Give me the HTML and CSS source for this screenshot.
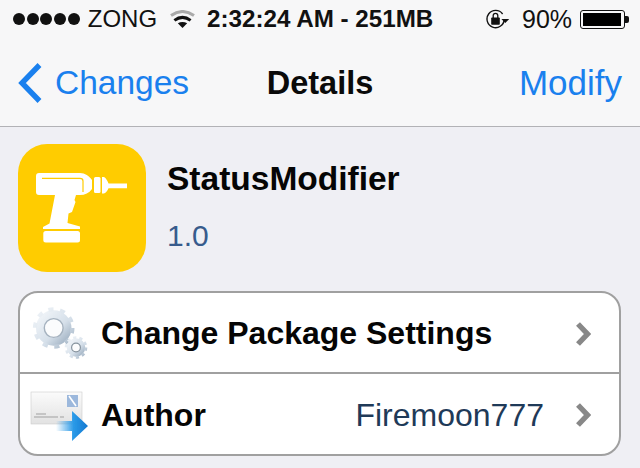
FILE: index.html
```html
<!DOCTYPE html>
<html lang="en">
<head>
<meta charset="utf-8">
<title>Details</title>
<link rel="stylesheet" href="styles.css">
</head>
<body>
<div class="screen">
  <header class="top">
    <div class="status">
      <div class="status-left">
        <div class="dots"><i></i><i></i><i></i><i></i><i></i></div>
        <span class="carrier">ZONG</span>
        <svg class="wifi" width="25" height="18" viewBox="0 0 25 18">
          <path d="M1 5.5 Q12.5 -2.5 24 5.5" fill="none" stroke="#aaa" stroke-width="3"/>
          <path d="M4.4 10.4 Q12.5 4.4 20.6 10.4" fill="none" stroke="#111" stroke-width="3"/>
          <path d="M7.8 13.2 Q12.5 10.6 17.2 13.2 L12.5 18 Z" fill="#111"/>
        </svg>
      </div>
      <span class="clock">2:32:24 AM - 251MB</span>
      <div class="status-right">
        <svg class="rotlock" width="24" height="24" viewBox="0 0 24 24">
          <path d="M18.2 12.6 A8.6 8.6 0 1 1 16.6 7" fill="none" stroke="#111" stroke-width="1.4"/>
          <path d="M15.4 12 L23.2 12 L19.3 16 Z" fill="#111"/>
          <rect x="5.2" y="10.5" width="8.6" height="7.2" rx=".8" fill="#111"/>
          <path d="M7.2 11 V8.6 A2.3 2.3 0 0 1 11.8 8.6 V11" fill="none" stroke="#111" stroke-width="1.3"/>
        </svg>
        <span class="percent">90%</span>
        <div class="battery"><div class="battery-shell"><div class="battery-fill"></div></div><div class="battery-cap"></div></div>
      </div>
    </div>
    <nav class="nav">
      <a class="back">
        <svg class="back-icon" width="24" height="42" viewBox="1 0 24 42"><path d="M22.5 3 L5 21 L22.5 39" fill="none" stroke="#1a80ee" stroke-width="5.4"/></svg>
        <span>Changes</span>
      </a>
      <h1 class="nav-title">Details</h1>
      <a class="nav-action">Modify</a>
    </nav>
  </header>
  <main class="content">
    <section class="package">
      <div class="app-icon">
        <svg width="128" height="128" viewBox="0 0 128 128">
          <path fill="#fff" d="M21 29 H62 C67 29 71 32 74 36 V45 C71 49 67 51 62 51 H58 L56.5 56 L57.5 58 L54 68 L50.5 69.5 L49.5 79 L62 82.5 V85 H25 V83 L31.5 79.5 L37 51 H21 C19 51 18 50 18 48 V32 C18 30 19 29 21 29 Z"/>
          <path fill="none" stroke="#ffcc00" stroke-width="1.2" d="M24 34.4 H62 C64 34.4 65 35.5 65 37 V48"/>
          <rect x="76" y="33" width="6.5" height="16" rx="1.5" fill="#fff"/>
          <path fill="#fff" d="M84 33 H86 C88 34 89.5 37 90.5 39.5 H109 V44.3 H90.5 C89.5 46.5 88 49 86 49.5 H84 Z"/>
          <rect x="25.3" y="87" width="36.7" height="11.5" rx="2.5" fill="#fff"/>
        </svg>
      </div>
      <div class="package-text">
        <h2 class="package-name">StatusModifier</h2>
        <p class="package-version">1.0</p>
      </div>
    </section>
    <section class="card">
      <div class="row row-first">
        <svg class="row-icon" width="60" height="60" viewBox="0 0 60 60">
          <defs>
            <linearGradient id="gear" x1="0" y1="0" x2="1" y2="1"><stop offset="0" stop-color="#f0f4f8"/><stop offset=".6" stop-color="#d6e0ea"/><stop offset="1" stop-color="#a2b3c4"/></linearGradient>
            <filter id="soft" x="-10%" y="-10%" width="120%" height="120%"><feGaussianBlur stdDeviation=".45"/></filter>
          </defs>
          <g filter="url(#soft)">
            <g fill="none" stroke="url(#gear)">
              <circle cx="23.7" cy="24" r="13.5" stroke-width="8.5"/>
              <circle cx="23.7" cy="24" r="18.8" stroke-width="4" stroke-dasharray="5.2 6.6"/>
              <circle cx="46" cy="43.5" r="6.8" stroke-width="5"/>
              <circle cx="46" cy="43.5" r="10" stroke-width="2.6" stroke-dasharray="3.2 3.08"/>
            </g>
            <circle cx="23.7" cy="24" r="9.4" fill="#fbfcfd" stroke="#a5b2bf" stroke-width="1.4"/>
            <circle cx="46" cy="43.5" r="4.4" fill="#fbfcfd" stroke="#86939e" stroke-width="1.2"/>
          </g>
        </svg>
        <span class="row-label">Change Package Settings</span>
        <svg class="chevron" width="18" height="26" viewBox="0 0 18 26"><path d="M4 3 L13.5 13 L4 23" fill="none" stroke="#888" stroke-width="5.4"/></svg>
      </div>
      <div class="row">
        <svg class="row-icon" width="60" height="60" viewBox="0 0 60 60">
          <defs>
            <linearGradient id="mail" x1="0" y1="0" x2="0" y2="1"><stop offset="0" stop-color="#fbfbfb"/><stop offset="1" stop-color="#e2e2e2"/></linearGradient>
            <linearGradient id="arrow" x1="0" y1="0" x2="1" y2="0"><stop offset="0" stop-color="#3aa0e8" stop-opacity="0"/><stop offset=".55" stop-color="#2a9ae8"/><stop offset="1" stop-color="#1478d0"/></linearGradient>
            <filter id="soft2" x="-10%" y="-10%" width="120%" height="120%"><feGaussianBlur stdDeviation=".4"/></filter>
          </defs>
          <g filter="url(#soft2)">
            <rect x="1" y="7" width="51" height="32" fill="url(#mail)" stroke="#ccc" stroke-width=".6"/>
            <rect x="37" y="10" width="11" height="12" fill="#9cb8dc"/>
            <path d="M39 11 L46 21" stroke="#fff" stroke-width="1.6"/>
            <path d="M6 29 H16 M4 32 H28 M30 32 H34" stroke="#999" stroke-width=".9"/>
            <path d="M26 36 H42 V26 L58 41 L42 56 V46 H26 Z" fill="url(#arrow)"/>
          </g>
        </svg>
        <span class="row-label">Author</span>
        <span class="row-value">Firemoon777</span>
        <svg class="chevron" width="18" height="26" viewBox="0 0 18 26"><path d="M4 3 L13.5 13 L4 23" fill="none" stroke="#888" stroke-width="5.4"/></svg>
      </div>
    </section>
  </main>
</div>
</body>
</html>
```
FILE: styles.css
```css
* { box-sizing: border-box; }
html, body { margin: 0; padding: 0; }
body { font-family: "Liberation Sans", Arial, sans-serif; background: #efeff4; }
.screen { width: 640px; height: 468px; overflow: hidden; display: flex; flex-direction: column; }
.top { height: 127px; background: #f7f7f8; border-bottom: 1px solid #b2b2b6; flex: none; }
.status { height: 40px; display: flex; align-items: center; padding: 0 0 2px 13px; color: #111; font-size: 24px; }
.status-left { display: flex; align-items: center; width: 194px; flex: none; }
.dots { display: flex; gap: 1.7px; }
.dots i { width: 12px; height: 12px; border-radius: 50%; background: #111; display: block; }
.carrier { margin-left: 8px; }
.wifi { margin-left: 13px; }
.clock { font-weight: bold; font-size: 24.2px; width: 226px; white-space: nowrap; flex: none; }
.status-right { display: flex; align-items: center; margin-left: 53px; }
.percent { margin-left: 12px; font-size: 25px; }
.battery { display: flex; align-items: center; margin-left: 8px; }
.battery-shell { width: 45px; height: 19px; border: 1px solid #111; border-radius: 3px; padding: 2px; }
.battery-fill { width: 38px; height: 100%; background: #000; }
.battery-cap { width: 4px; height: 7px; background: #111; border-radius: 0 2px 2px 0; }
.nav { height: 86px; display: grid; grid-template-columns: 1fr auto 1fr; align-items: center; padding: 0 18px; }
.back { display: flex; align-items: center; color: #1a80ee; font-size: 33.5px; }
.back-icon { margin-right: 13px; }
.nav-title { margin: 0; font-size: 32.5px; font-weight: bold; color: #0a0a0a; }
.nav-action { color: #1a80ee; font-size: 35px; justify-self: end; }
.content { flex: 1; padding: 17px 18px 0; }
.package { display: flex; height: 147px; }
.app-icon { width: 128px; height: 128px; border-radius: 29px; background: #ffcc00; flex: none; overflow: hidden; }
.app-icon svg { display: block; }
.package-text { margin-left: 21px; }
.package-name { margin: 15px 0 0; font-size: 33.5px; line-height: 40px; font-weight: bold; color: #050505; }
.package-version { margin: 19px 0 0; font-size: 30px; line-height: 36px; color: #375b8c; }
.card { background: #fff; border: 2px solid #a0a0a0; border-radius: 20px; height: 165px; width: 603px; overflow: hidden; display: flex; flex-direction: column; }
.row { flex: 1; display: flex; align-items: center; padding: 2px 27px 0 10px; }
.row-first { flex: none; height: 79px; }
.row + .row { border-top: 2px solid #a0a0a0; }
.row-icon { flex: none; }
.row-label { margin-left: 11px; font-size: 32px; font-weight: bold; color: #050505; }
.row-value { margin-left: auto; margin-right: 30px; font-size: 32px; color: #1f3a58; }
.chevron { margin-left: auto; flex: none; }
.row-value + .chevron { margin-left: 0; }
```
